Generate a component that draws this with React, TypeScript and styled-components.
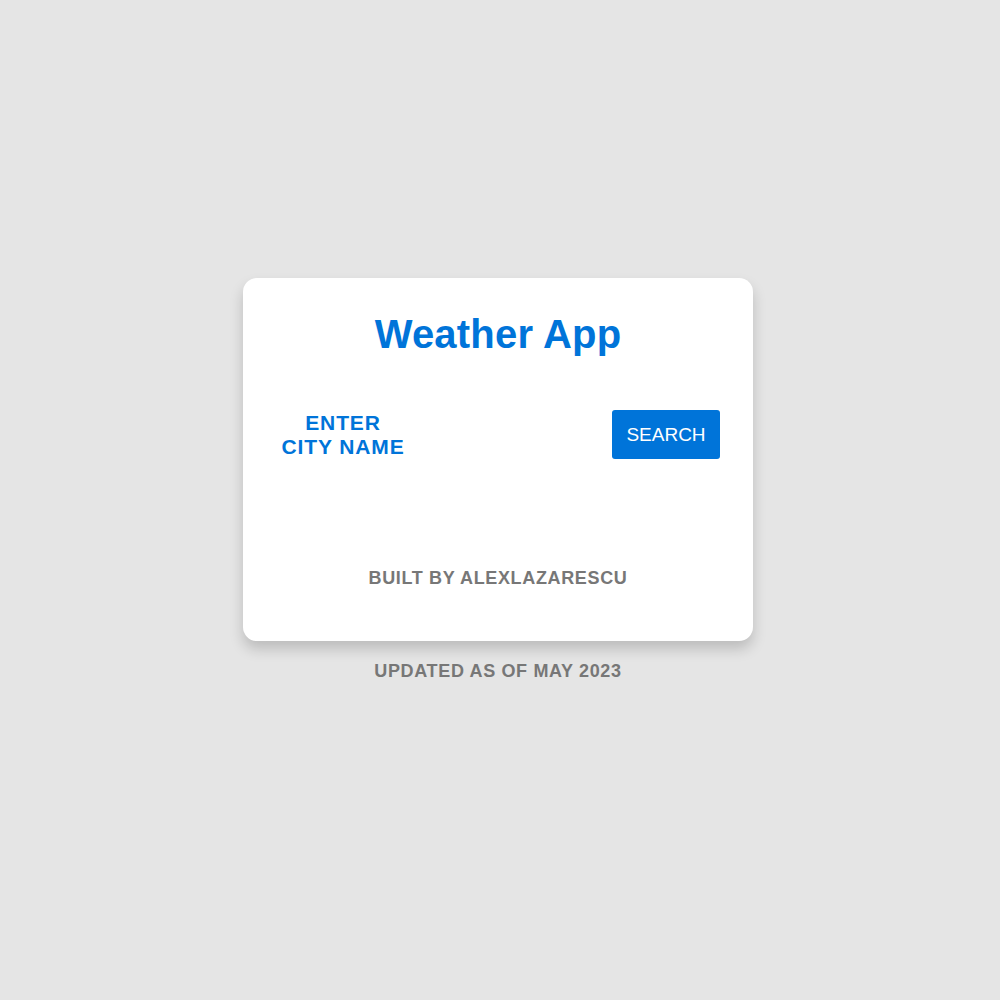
import styled, { createGlobalStyle } from 'styled-components';

const GlobalStyle = createGlobalStyle`
  html, body {
    margin: 0;
    padding: 0;
    background: #e5e5e5;
    font-family: "Liberation Sans", Arial, sans-serif;
  }
`

const Page = styled.div`
  min-height: 100vh;
  display: flex;
  flex-direction: column;
  align-items: center;
  padding-top: 278px;
  padding-right: 4px;
  box-sizing: border-box;
`

const Card = styled.div`
  width: 510px;
  height: 363px;
  box-sizing: border-box;
  background: #fff;
  border-radius: 14px;
  box-shadow: 0 8px 14px rgba(0, 0, 0, 0.18);
  display: flex;
  flex-direction: column;
  align-items: center;
  padding: 33px 33px 0;
`

const Title = styled.h1`
  margin: 0;
  font-size: 40px;
  font-weight: bold;
  color: #0074d9;
  line-height: 46px;
  letter-spacing: 0.2px;
`

const SearchRow = styled.div`
  width: 100%;
  display: flex;
  align-items: center;
  justify-content: space-between;
  margin-top: 53px;
`

const CityLabel = styled.div`
  width: 134px;
  text-align: center;
  font-size: 21px;
  font-weight: bold;
  line-height: 24px;
  letter-spacing: 0.9px;
  color: #0074d9;
  text-transform: uppercase;
`

const SearchButton = styled.button`
  width: 108px;
  height: 49px;
  background: #0074d9;
  color: #fff;
  border: none;
  border-radius: 3px;
  font-family: "Liberation Sans", Arial, sans-serif;
  font-size: 19px;
  text-transform: uppercase;
  cursor: pointer;
`

const Credit = styled.p<{ $top: number }>`
  margin: ${p => p.$top}px 0 0;
  font-size: 18px;
  font-weight: bold;
  letter-spacing: 0.65px;
  line-height: 22px;
  color: #777;
  text-transform: uppercase;
`

function App() {
  return (
    <>
      <GlobalStyle />
      <Page>
        <Card>
          <Title>Weather App</Title>
          <SearchRow>
            <CityLabel>Enter<br />city name</CityLabel>
            <SearchButton>Search</SearchButton>
          </SearchRow>
          <Credit $top={108}>Built by alexlazarescu</Credit>
        </Card>
        <Credit $top={19}>Updated as of May 2023</Credit>
      </Page>
    </>
  );
}

export default App;
